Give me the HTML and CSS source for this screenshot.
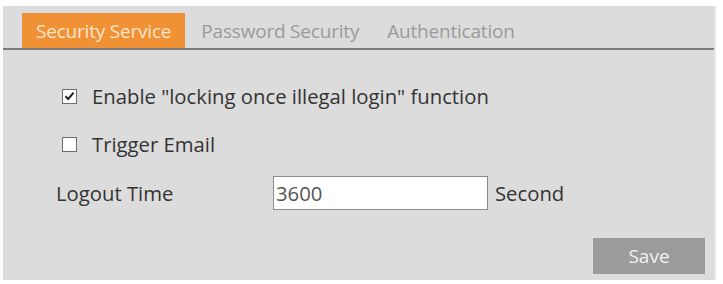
FILE: index.html
```html
<!DOCTYPE html>
<html>
<head>
<meta charset="utf-8">
<link rel="stylesheet" href="styles.css">
</head>
<body>
<div class="page">
  <div class="panel">
    <div class="tabs">
      <div class="tab active">Security Service</div>
      <div class="tab">Password Security</div>
      <div class="tab">Authentication</div>
    </div>
    <div class="content">
      <label class="check-row first">
        <span class="box checked">
          <svg width="11" height="10" viewBox="0 0 11 10"><path d="M1.5 5.2 L4.2 8 L9.6 1.6" fill="none" stroke="#222" stroke-width="2"/></svg>
        </span>
        <span class="label">Enable "locking once illegal login" function</span>
      </label>
      <label class="check-row second">
        <span class="box"></span>
        <span class="label">Trigger Email</span>
      </label>
      <div class="field-row">
        <span class="field-label">Logout Time</span>
        <span class="input">3600</span>
        <span class="unit">Second</span>
      </div>
      <div class="actions">
        <div class="btn">Save</div>
      </div>
    </div>
  </div>
</div>
</body>
</html>
```
FILE: styles.css
```css
html, body {
  margin: 0;
  padding: 0;
  background: #ffffff;
}
body {
  font-family: "Open Sans", "Noto Sans", sans-serif;
  color: #333;
}
.page {
  width: 723px;
  height: 284px;
  padding: 6px 7px 4px 3px;
  box-sizing: border-box;
}
.panel {
  height: 274px;
  background: #dcdcdc;
  border-right: 2px solid #e8e8e8;
  box-sizing: border-box;
  display: flex;
  flex-direction: column;
}
.tabs {
  height: 44px;
  box-sizing: border-box;
  border-bottom: 2px solid #7c7c7c;
  display: flex;
  align-items: flex-end;
  padding-left: 19px;
}
.tab {
  height: 35px;
  display: flex;
  align-items: center;
  padding: 0 14px;
  font-size: 19px;
  color: #9a9a9a;
  letter-spacing: -0.2px;
}
.tab.active {
  background: #f19136;
  color: #fde6cc;
  margin-right: 2px;
}
.content {
  flex: 1;
  display: flex;
  flex-direction: column;
  padding-left: 59px;
  padding-right: 9px;
}
.check-row {
  display: flex;
  align-items: center;
  height: 24px;
  font-size: 20.3px;
  color: #333;
}
.check-row.first {
  margin-top: 34px;
}
.check-row.second {
  margin-top: 24px;
}
.box {
  width: 13px;
  height: 13px;
  border: 1px solid #6d6d6d;
  background: #fff;
  display: flex;
  align-items: center;
  justify-content: center;
  margin-right: 15px;
}
.field-row {
  display: flex;
  align-items: center;
  margin-top: 20px;
  margin-left: -6px;
  height: 34px;
  font-size: 20.3px;
}
.field-label {
  width: 217px;
}
.input {
  width: 211px;
  height: 32px;
  border: 1px solid #8c8c8c;
  background: #fff;
  display: flex;
  align-items: center;
  padding-left: 2px;
  color: #555;
  margin-right: 7px;
}
.actions {
  display: flex;
  justify-content: flex-end;
  margin-top: 28px;
}
.btn {
  width: 112px;
  height: 36px;
  background: #9b9b9b;
  color: #f2f2f2;
  font-size: 19px;
  display: flex;
  align-items: center;
  justify-content: center;
}
```
